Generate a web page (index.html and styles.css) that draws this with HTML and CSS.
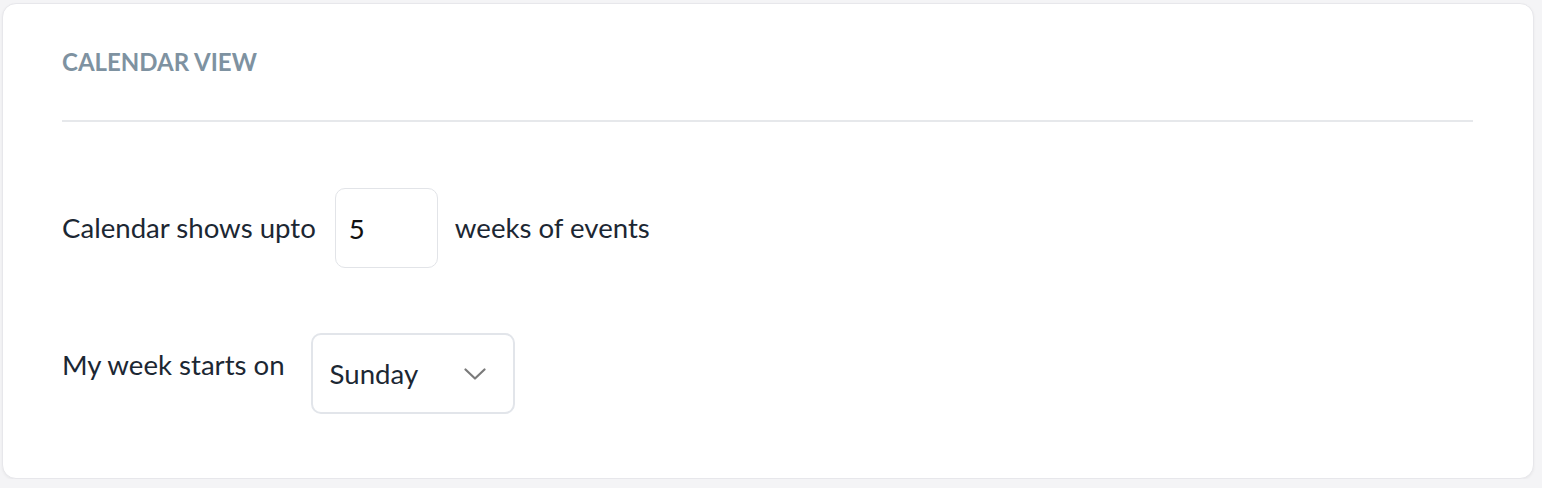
FILE: index.html
```html
<!DOCTYPE html>
<html>
<head>
<meta charset="utf-8">
<link rel="stylesheet" href="styles.css">
</head>
<body>
<section class="card">
  <h2 class="card-title">CALENDAR VIEW</h2>
  <hr class="divider">
  <div class="row row-weeks">
    <span class="label">Calendar shows upto</span>
    <div class="num-input">5</div>
    <span class="label">weeks of events</span>
  </div>
  <div class="row row-start">
    <span class="label">My week starts on</span>
    <div class="select">
      <span class="select-value">Sunday</span>
      <svg class="chevron" width="22" height="12" viewBox="0 0 22 12"><path d="M1.5 1.5 L11 10.5 L20.5 1.5" fill="none" stroke="#7a7a7a" stroke-width="2.2" stroke-linecap="round" stroke-linejoin="round"/></svg>
    </div>
  </div>
</section>
</body>
</html>
```
FILE: styles.css
```css
html, body {
  margin: 0;
  padding: 0;
  background: #f4f4f6;
}
body {
  padding: 3px 0 0 2px;
  font-family: Lato, "Noto Sans", sans-serif;
  color: #1c2733;
}
.card {
  box-sizing: border-box;
  width: 1532px;
  height: 476px;
  background: #ffffff;
  border: 1px solid #e7e7eb;
  border-radius: 14px;
  box-shadow: 0 1px 3px rgba(0, 0, 0, 0.05);
  padding: 43px 60px 0 59px;
}
.card-title {
  margin: 0;
  font-size: 24px;
  line-height: 29px;
  font-weight: 700;
  color: #7e92a1;
}
.divider {
  margin: 44px 0 0 0;
  border: 0;
  height: 2px;
  background: #e6e8eb;
}
.row {
  display: flex;
  align-items: center;
  gap: 17px;
}
.row-weeks {
  margin-top: 66px;
}
.row-weeks .num-input {
  margin-left: 2px;
}
.row-start {
  margin-top: 65px;
  gap: 26px;
}
.label {
  font-size: 27.6px;
  line-height: 34px;
}
.row-weeks .label {
  margin-top: -1px;
}
.row-start .label {
  align-self: flex-start;
  margin-top: 15px;
}
.num-input {
  box-sizing: border-box;
  width: 103px;
  height: 80px;
  border: 1px solid #e2e4e8;
  border-radius: 10px;
  padding: 0 0 0 13px;
  display: flex;
  align-items: center;
  font-size: 27.6px;
  color: #111;
}
.select {
  box-sizing: border-box;
  width: 204px;
  height: 81px;
  border: 2px solid #e2e5ea;
  border-radius: 10px;
  padding: 0 27px 0 17px;
  display: flex;
  align-items: center;
  justify-content: space-between;
}
.select-value {
  font-size: 27.6px;
  color: #1c2733;
}
.chevron {
  display: block;
}
```
